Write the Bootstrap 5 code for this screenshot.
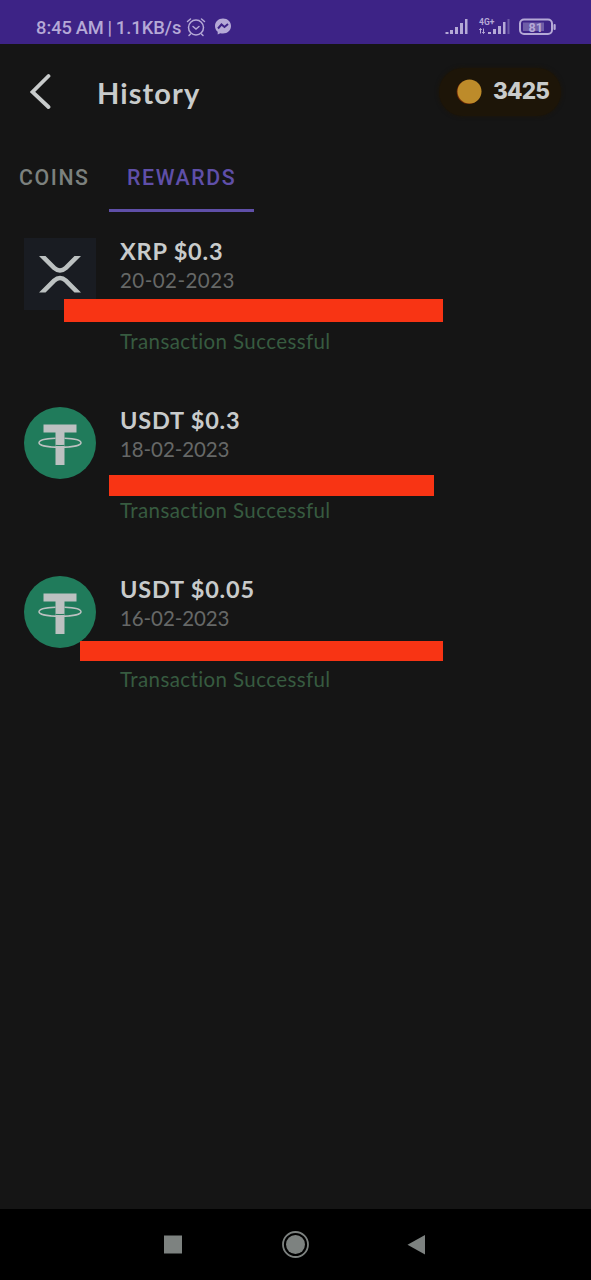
<!DOCTYPE html>
<html lang="en">
<head>
<meta charset="utf-8">
<meta name="viewport" content="width=device-width, initial-scale=1">
<title>History</title>
<link href="https://cdn.jsdelivr.net/npm/bootstrap@5.3.0/dist/css/bootstrap.min.css" rel="stylesheet">
<style>
body{background:#151515;color:#c8cbcb;font-family:Lato,"Open Sans",sans-serif;height:1280px;overflow:hidden;font-variant-ligatures:none}
svg{display:block;flex:none}
.status{height:44px;background:#3d2386;color:#b5a9d6;font:500 18.3px/22px Roboto,sans-serif;padding:17px 35px 0 36px}
.status .time{white-space:pre;width:147px;word-spacing:-.8px}
.topbar{height:98px;padding:0 30px 0 30px}
.topbar h1{font-size:29px;font-weight:700;line-height:36px;letter-spacing:1.1px;margin:0 0 0 46px}
.coin-pill{width:122px;height:48px;border-radius:24px;background:#1d1508;padding-left:17px;box-shadow:0 0 4px #1d1508;margin-top:-2px}
.coin-pill span{font:800 22.5px/28px Inter,sans-serif;margin:-3px 0 0 11px;letter-spacing:-.8px}
.tabs{height:70px;font:500 21.3px/26px Roboto,sans-serif;letter-spacing:1.6px}
.tab{height:70px;padding-top:23px;color:#7c817e;width:109px;padding-left:19px}
.tab.on{color:#5f4fa8;width:145px;padding-left:18px;border-bottom:3px solid #5f4fa8}
.entries{padding:26px 24px 0}
.entry{height:169px;position:relative}
.entry .amount{font-size:23.5px;font-weight:700;line-height:28px;letter-spacing:.8px;margin-top:-1px}
.entry .date{font-size:20.5px;line-height:28px;color:#666867;letter-spacing:.45px;margin-top:1px}
.entry .date.narrow{letter-spacing:-.1px}
.entry .result{font-size:20.5px;line-height:28px;letter-spacing:.4px;color:#375b40;margin-top:33px}
.redact{position:absolute;background:#f83414}
.r1{left:40px;top:61px;width:379px;height:23px}
.r2{left:85px;top:68px;width:325px;height:21px}
.r3{left:56px;top:65px;width:363px;height:20px}
.navkeys{height:71px;background:#000}
</style>
</head>
<body class="d-flex flex-column">
<svg width="0" height="0" class="position-absolute"><defs>
<symbol id="tether" viewBox="0 0 72 72"><circle cx="36" cy="36" r="36" fill="#207b5b"/><path d="M19.500 17.500h33v8h-12v32.500h-9v-32.500h-12z" fill="#bcc1c1"/><path d="M31.500 31.200C22 31.500 15 33.200 15 35.700c0 2.700 9.400 4.500 21 4.500s21-1.800 21-4.500c0-2.500-7-4.200-16.500-4.500" fill="none" stroke="#bcc1c1" stroke-width="1.500"/><path d="M31.500 38.400q4.500.3 9 0" fill="none" stroke="#207b5b" stroke-width="1"/></symbol>
</defs></svg>
<header class="status d-flex flex-none">
  <span class="time">8:45 AM | 1.1KB/s</span>
  <svg style="margin-left:3px" width="20" height="22" viewBox="0 0 20 22" fill="none" stroke="#b5a9d6" stroke-width="1.500" stroke-linecap="round"><circle cx="10" cy="10.500" r="7.500"/><path d="M7 9.500l3 2.500 3-2.500M1.500 4.500L4.500 2M18.500 4.500L15.500 2M4.500 17L3 18.500M15.500 17l1.500 1.500"/></svg>
  <svg style="margin-left:8px" width="18" height="20" viewBox="0 0 18 20"><path d="M9 1.500C4.300 1.500 1 4.800 1 9c0 2.400 1 4.400 2.700 5.800V17.500l2.600-1.300c.9.200 1.700.3 2.700.3 4.700 0 8-3.300 8-7.500S13.700 1.500 9 1.500z" fill="#b5a9d6"/><path d="M4 11.500l3.500-4 3 2.500 3.500-3" fill="none" stroke="#3d2386" stroke-width="2"/></svg>
  <svg class="ms-auto" width="111" height="24" viewBox="445 17 111 24" fill="#b5a9d6"><path d="M445.500 32h3v2h-3zM450 30h3v4h-3zM455 27h3v7h-3zM460 23h3v11h-3zM465 19h2.500v15h-2.500zM488 32h3v2h-3zM493 29h3v5h-3zM498 26h3v8h-3zM503 22h2.500v12h-2.500z"/><path d="M507.500 19h2v15h-2z" opacity=".4"/><path d="M480.500 33.500v-5M479.200 30l1.300-1.500 1.300 1.500M483.500 28.500v5M482.200 32l1.300 1.500 1.300-1.500" fill="none" stroke="#b5a9d6" stroke-width="1"/><text x="479" y="24.500" font-size="8.500" font-weight="700" font-family="Roboto">4G+</text><rect x="520" y="19.500" width="32" height="14.500" rx="4" fill="none" stroke="#b5a9d6" stroke-width="2"/><rect x="523" y="22.500" width="21" height="8.500" fill="#6f5da7"/><rect x="553.500" y="24" width="2.200" height="6" rx="1"/><text x="528.500" y="31.500" font-size="12.500" font-weight="700" font-family="Roboto">81</text></svg>
</header>
<section class="topbar d-flex align-items-center flex-none">
  <svg class="mb-1" width="21" height="36" viewBox="0 0 21 36" fill="none" stroke="#c8cbcb" stroke-width="3.800" stroke-linecap="round"><path d="M18.500 3L2.500 19l16 15"/></svg>
  <h1>History</h1>
  <div class="coin-pill d-flex align-items-center ms-auto"><svg width="26" height="26" viewBox="0 0 26 26"><circle cx="12.700" cy="13" r="12" fill="#752b08"/><circle cx="13.500" cy="12.500" r="12" fill="#bd8b2a"/></svg><span>3425</span></div>
</section>
<nav class="tabs d-flex flex-none"><div class="tab">COINS</div><div class="tab on">REWARDS</div></nav>
<main class="entries flex-grow-1">
  <article class="entry d-flex">
    <svg width="72" height="72" viewBox="0 0 72 72"><rect width="72" height="72" fill="#191c22"/><path d="M15 18h6.500L32 28.500q4 3.500 8 0L50.500 18H57L43.500 31.500q-7.500 6.500-15 0zM15 54.500h6.500L32 44q4-3.500 8 0L50.500 54.500H57L43.500 41q-7.500-6.500-15 0z" fill="#bcc1c1"/></svg>
    <div class="ms-4"><div class="amount">XRP $0.3</div><div class="date">20-02-2023</div><div class="result">Transaction Successful</div></div>
    <div class="redact r1"></div>
  </article>
  <article class="entry d-flex">
    <svg width="72" height="72"><use href="#tether"/></svg>
    <div class="ms-4"><div class="amount">USDT $0.3</div><div class="date narrow">18-02-2023</div><div class="result">Transaction Successful</div></div>
    <div class="redact r2"></div>
  </article>
  <article class="entry d-flex">
    <svg width="72" height="72"><use href="#tether"/></svg>
    <div class="ms-4"><div class="amount">USDT $0.05</div><div class="date narrow">16-02-2023</div><div class="result">Transaction Successful</div></div>
    <div class="redact r3"></div>
  </article>
</main>
<footer class="navkeys flex-none">
  <svg width="591" height="71" viewBox="0 0 591 71" fill="#7d8280"><rect x="164" y="26.500" width="18" height="18"/><circle cx="295.500" cy="35.500" r="9.500"/><circle cx="295.500" cy="35.500" r="12.500" fill="none" stroke="#7d8280" stroke-width="1.800"/><path d="M425 26v19.500L407.500 35.700z"/></svg>
</footer>
<script src="https://cdn.jsdelivr.net/npm/bootstrap@5.3.0/dist/js/bootstrap.bundle.min.js"></script>
</body>
</html>
